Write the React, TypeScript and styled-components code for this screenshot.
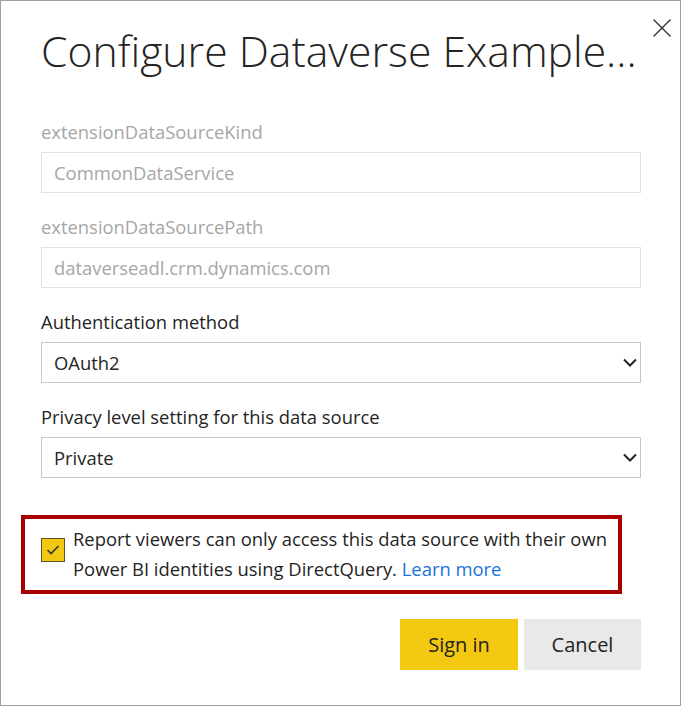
import React from 'react';
import styled, { createGlobalStyle } from 'styled-components';

const GlobalStyle = createGlobalStyle`
  html, body {
    margin: 0;
    padding: 0;
    background: #ffffff;
  }
  * {
    box-sizing: border-box;
  }
`;

const fontStack = `"Open Sans", "Noto Sans", "Liberation Sans", sans-serif`;

const Dialog = styled.div`
  position: relative;
  width: 681px;
  height: 706px;
  border: 1px solid #a0a0a0;
  background: #ffffff;
  padding: 0 39px 0 40px;
  font-family: ${fontStack};
  color: #252423;
  display: flex;
  flex-direction: column;
`;

const CloseButton = styled.button`
  position: absolute;
  top: 17px;
  right: 8px;
  width: 20px;
  height: 20px;
  padding: 0;
  border: none;
  background: transparent;
  cursor: pointer;
  display: flex;
  align-items: center;
  justify-content: center;
`;

const Title = styled.h1`
  margin: 22px 0 0;
  font-size: 42.7px;
  font-weight: 300;
  line-height: 56px;
  white-space: nowrap;
  color: #252423;
`;

const Form = styled.div`
  margin-top: 41px;
  display: flex;
  flex-direction: column;
  gap: 22px;
`;

const Field = styled.div`
  display: flex;
  flex-direction: column;
  gap: 8px;
`;

const Label = styled.label<{ $disabled?: boolean }>`
  font-size: 18.4px;
  line-height: 24px;
  color: ${(p) => (p.$disabled ? '#a6a6a6' : '#252423')};
`;

const TextBox = styled.div`
  height: 41px;
  border: 1px solid #e1e1e1;
  padding: 0 12px;
  display: flex;
  align-items: center;
  font-size: 18.4px;
  color: #a6a6a6;
`;

const SelectBox = styled.div`
  height: 41px;
  border: 1px solid #c8c8c8;
  padding: 0 3px 0 12px;
  display: flex;
  align-items: center;
  justify-content: space-between;
  font-size: 18.4px;
  color: #252423;
`;

const Notice = styled.div`
  margin: 37px 0 0 -20px;
  width: 601px;
  border: 4px solid #a80000;
  padding: 5px 6px 6px 16px;
  display: flex;
  align-items: flex-start;
  gap: 8px;
`;

const Checkbox = styled.span`
  flex: none;
  margin-top: 14px;
  width: 24px;
  height: 24px;
  border: 1px solid #5c5330;
  background: #f2c811;
  display: flex;
  align-items: center;
  justify-content: center;
`;

const NoticeText = styled.p`
  margin: 0;
  font-size: 18.4px;
  line-height: 30px;
  color: #252423;
`;

const LearnMore = styled.a`
  color: #1a73d9;
  text-decoration: none;
`;

const Actions = styled.div`
  margin-top: 25px;
  display: flex;
  justify-content: flex-end;
  gap: 6px;
`;

const Button = styled.button<{ $primary?: boolean }>`
  width: ${(p) => (p.$primary ? '118px' : '117px')};
  height: 51px;
  border: none;
  padding: 0;
  font-family: ${fontStack};
  font-size: 20px;
  color: #252423;
  background: ${(p) => (p.$primary ? '#f2c811' : '#e9e9e9')};
  cursor: pointer;
`;

const Chevron = () => (
  <svg width="14" height="9" viewBox="0 0 14 9" fill="none">
    <polyline points="1,1.5 7,7.5 13,1.5" stroke="#252423" strokeWidth="2" />
  </svg>
);

const fields = [
  { label: 'extensionDataSourceKind', value: 'CommonDataService' },
  { label: 'extensionDataSourcePath', value: 'dataverseadl.crm.dynamics.com' },
];

const selects = [
  { label: 'Authentication method', value: 'OAuth2' },
  { label: 'Privacy level setting for this data source', value: 'Private' },
];

export default function App() {
  return (
    <>
      <GlobalStyle />
      <Dialog>
        <CloseButton aria-label="Close">
          <svg width="20" height="20" viewBox="0 0 20 20">
            <path d="M1.5 1.5 L18.5 18.5 M18.5 1.5 L1.5 18.5" stroke="#333" strokeWidth="1.4" />
          </svg>
        </CloseButton>
        <Title>Configure Dataverse Example...</Title>
        <Form>
          {fields.map((f) => (
            <Field key={f.label}>
              <Label $disabled>{f.label}</Label>
              <TextBox>{f.value}</TextBox>
            </Field>
          ))}
          {selects.map((s) => (
            <Field key={s.label}>
              <Label>{s.label}</Label>
              <SelectBox>
                <span>{s.value}</span>
                <Chevron />
              </SelectBox>
            </Field>
          ))}
        </Form>
        <Notice>
          <Checkbox>
            <svg width="16" height="12" viewBox="0 0 16 12" fill="none">
              <polyline points="2.5,6 6,9.5 13.5,2" stroke="#333" strokeWidth="1.6" />
            </svg>
          </Checkbox>
          <NoticeText>
            Report viewers can only access this data source with their own Power BI identities
            using DirectQuery. <LearnMore href="#">Learn more</LearnMore>
          </NoticeText>
        </Notice>
        <Actions>
          <Button $primary>Sign in</Button>
          <Button>Cancel</Button>
        </Actions>
      </Dialog>
    </>
  );
}
